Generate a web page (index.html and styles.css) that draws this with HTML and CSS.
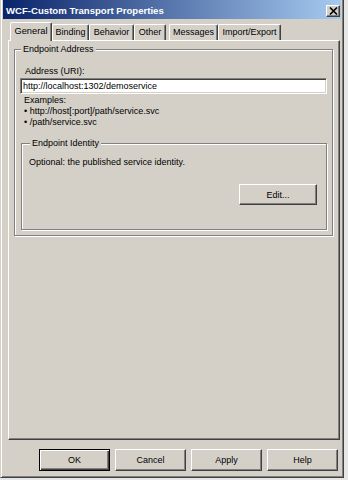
FILE: index.html
```html
<!DOCTYPE html>
<html>
  <head>
    <meta charset="utf-8" />
    <title>WCF-Custom Transport Properties</title>
    <link rel="stylesheet" href="styles.css">
  </head>
  <body>
    <div class="window">
      <!-- title bar -->
      <div class="titlebar">
        <span class="title">WCF-Custom Transport Properties</span>
        <button class="close" type="button">
          <svg width="9" height="8" viewBox="0 0 9 8">
            <path d="M1 0.5 L8 7.5 M8 0.5 L1 7.5" stroke="#000" stroke-width="1.6" fill="none" />
          </svg>
        </button>
      </div>

      <!-- tabs -->
      <div class="tabs">
        <div class="tab tab-general active">General</div>
        <div class="tab tab-binding">Binding</div>
        <div class="tab tab-behavior">Behavior</div>
        <div class="tab tab-other">Other</div>
        <div class="tab tab-messages">Messages</div>
        <div class="tab tab-import">Import/Export</div>
      </div>

      <!-- tab page -->
      <div class="panel">
        <fieldset class="group outer">
          <legend>Endpoint Address</legend>
          <div class="field-label">Address (URI):</div>
          <input class="address" type="text" value="http://localhost:1302/demoservice" />
          <div class="examples">
            Examples:<br>
            &bull; http://host[:port]/path/service.svc<br>
            &bull; /path/service.svc
          </div>

          <fieldset class="group inner">
            <legend>Endpoint Identity</legend>
            <div class="hint">Optional: the published service identity.</div>
            <div class="edit-row">
              <button class="btn btn-edit" type="button">Edit...</button>
            </div>
          </fieldset>
        </fieldset>
      </div>

      <!-- dialog buttons -->
      <div class="buttons">
        <button class="btn btn-default" type="button">OK</button>
        <button class="btn" type="button">Cancel</button>
        <button class="btn" type="button">Apply</button>
        <button class="btn" type="button">Help</button>
      </div>
    </div>
  </body>
</html>
```

FILE: styles.css
```css
body {
  margin: 0;
  padding: 0;
  width: 348px;
  height: 480px;
  overflow: hidden;
  background-color: #e6e6e6;
  font-family: "Liberation Sans", Arial, sans-serif;
  font-size: 9px;
  color: #000;
}

.window {
  box-sizing: border-box;
  width: 344px;
  height: 478px;
  display: flex;
  flex-direction: column;
  background-color: #d4d0c8;
  border: 1px solid #404040;
  border-top: 0;
  border-left-color: #d4d0c8;
  box-shadow: inset 1px 0 0 #fff, inset -1px -1px 0 #808080;
  padding: 0 2px 2px 2px;
}

/* title bar */
.titlebar {
  height: 19px;
  display: flex;
  align-items: center;
  background: linear-gradient(to right, #0a246a, #a6caf0);
  padding: 0 1px 0 3px;
}
.title {
  flex: 1;
  color: #fff;
  font-weight: bold;
  font-size: 9.6px;
  margin-top: 1px;
}
.close {
  box-sizing: border-box;
  width: 14px;
  height: 12px;
  margin: 2px 0 0 0;
  padding: 0;
  display: flex;
  align-items: center;
  justify-content: center;
  background-color: #d4d0c8;
  border: 1px solid;
  border-color: #fff #404040 #404040 #fff;
  box-shadow: inset -1px -1px 0 #808080;
}

/* tabs */
.tabs {
  height: 21px;
  display: flex;
  align-items: flex-end;
  padding-left: 7px;
  position: relative;
  z-index: 1;
}
.tab {
  box-sizing: border-box;
  height: 16px;
  line-height: 15px;
  text-align: center;
  border: 1px solid;
  border-bottom: 0;
  border-color: #fff #404040 #fff #fff;
  border-radius: 2px 2px 0 0;
  box-shadow: inset -1px 0 0 #808080;
  background-color: #d4d0c8;
}
.tab.active {
  height: 19px;
  line-height: 17px;
  margin-bottom: -1px;
  font-size: 9.3px;
}
.tab-general { width: 42px; }
.tab-binding { width: 37px; }
.tab-behavior { width: 45px; }
.tab-other { width: 32px; margin-right: 3px; }
.tab-messages { width: 49px; }
.tab-import { width: 63px; }

/* tab page */
.panel {
  box-sizing: border-box;
  height: 400px;
  margin-left: 5px;
  margin-right: 1px;
  border: 1px solid;
  border-color: #fff #404040 #404040 #fff;
  box-shadow: inset -1px -1px 0 #808080;
  padding: 3px 6px 0 5px;
}

.group {
  margin: 0;
  border: 1px solid #808080;
  box-shadow: 1px 1px 0 #fff, inset 1px 1px 0 #fff;
  padding: 0 5px;
}
.group legend {
  padding: 0 2px;
  margin-left: 1px;
  line-height: 11px;
  background-color: #d4d0c8;
}
.outer {
  padding-top: 11px;
  padding-bottom: 5px;
}
.field-label {
  line-height: 11px;
  padding-left: 5px;
  margin-bottom: 1px;
}
.address {
  box-sizing: border-box;
  display: block;
  width: 100%;
  height: 16px;
  margin: 0;
  padding: 0 2px;
  font-family: "Liberation Sans", Arial, sans-serif;
  font-size: 9px;
  color: #000;
  background-color: #fff;
  border: 1px solid;
  border-color: #808080 #fff #fff #808080;
  box-shadow: inset 1px 1px 0 #404040, inset -1px -1px 0 #d4d0c8;
  outline: none;
}
.examples {
  line-height: 11px;
  padding-left: 4px;
  margin-top: 1px;
}

.inner {
  margin: 10px 0 0 1px;
  padding: 8px 9px 24px 7px;
}
.hint {
  line-height: 11px;
}
.edit-row {
  display: flex;
  justify-content: flex-end;
  margin-top: 16px;
}

/* buttons */
.btn {
  box-sizing: border-box;
  width: 71px;
  height: 22px;
  margin: 0;
  padding: 0;
  font-family: "Liberation Sans", Arial, sans-serif;
  font-size: 9px;
  color: #000;
  background-color: #d4d0c8;
  border: 1px solid;
  border-color: #fff #404040 #404040 #fff;
  box-shadow: inset -1px -1px 0 #808080;
}
.btn-edit {
  width: 78px;
  height: 21px;
}
.btn-default {
  border-color: #000;
  box-shadow: inset 1px 1px 0 #fff, inset -1px -1px 0 #404040, inset -2px -2px 0 #808080;
}

.buttons {
  display: flex;
  justify-content: flex-end;
  gap: 5px;
  margin-top: 9px;
  padding-right: 3px;
}
```
